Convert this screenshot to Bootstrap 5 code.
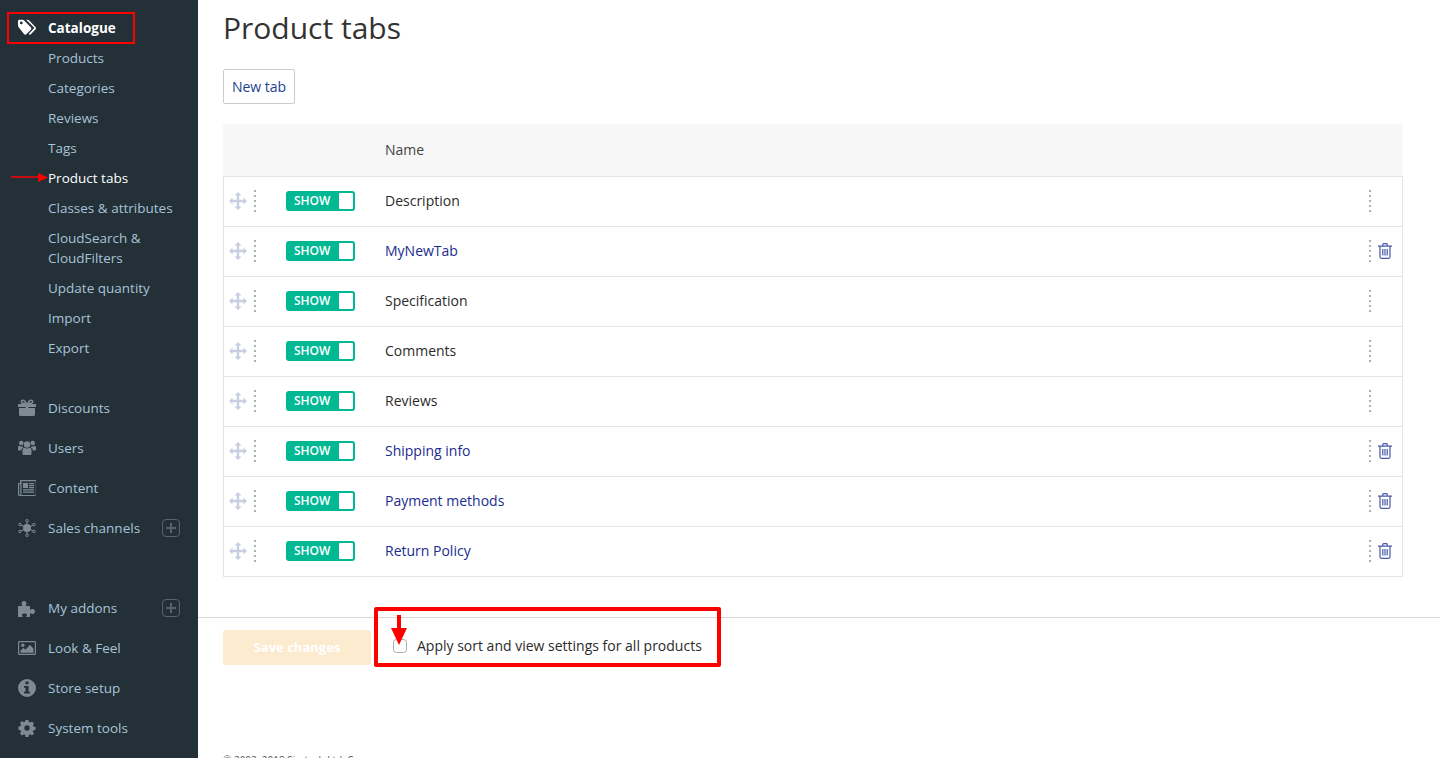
<!DOCTYPE html>
<html lang="en">
<head>
  <meta charset="UTF-8" />
  <title>Product tabs</title>
  <link href="https://cdn.jsdelivr.net/npm/bootstrap@5.3.0/dist/css/bootstrap.min.css" rel="stylesheet"/>
  <style>
    html, body { height: 100%; overflow: hidden; }
    body {
      font-family: "Open Sans", "Liberation Sans", sans-serif;
      font-size: 14px;
      color: #2b2b2b;
      background: #fff;
      position: relative;
    }
    .page-wrap { height: 758px; overflow: hidden; }

    /* sidebar */
    .side-bar { width: 198px; flex: none; background: #233038; padding-top: 13px; font-size: 13.5px; }
    .side-item {
      height: 30px;
      display: flex;
      align-items: center;
      padding-left: 48px;
      color: #a9c3d6;
      text-decoration: none;
      position: relative;
    }
    .side-item.is-head { color: #fff; font-weight: 700; }
    .side-item.is-on { color: #fff; }
    .side-main { height: 40px; }
    .side-cont { height: 20px; margin-top: -5px; margin-bottom: 5px; }
    .side-gap { height: 25px; }
    .side-gap2 { height: 40px; }
    .side-icon { position: absolute; left: 18px; top: 50%; transform: translateY(-50%); width: 18px; height: 18px; fill: #7d8a92; }
    .is-head .side-icon { fill: #fff; }
    .side-plus {
      position: absolute; left: 162px; top: 50%; transform: translateY(-50%);
      width: 18px; height: 18px;
      border: 1px solid #56636b; border-radius: 4px;
    }
    .side-plus::before, .side-plus::after { content: ""; position: absolute; background: #56636b; }
    .side-plus::before { left: 3px; right: 3px; top: 7px; height: 2px; }
    .side-plus::after { top: 3px; bottom: 3px; left: 7px; width: 2px; }

    /* main */
    .main-area { padding: 8px 37px 0 25px; height: 617px; }
    .page-title { font-size: 30px; font-weight: 400; line-height: 40px; margin: 0 0 21px; color: #333; }
    .btn-newtab {
      font-size: 14px; color: #1d3f8f; border: 1px solid #ccc; background: #fff;
      height: 35px; width: 72px; padding: 0; border-radius: 2px; display: block; margin-bottom: 20px;
    }
    .tabs-head { height: 53px; background: #f7f7f7; border-bottom: 1px solid #e5e5e5; display: flex; align-items: center; padding: 0 0 2px 162px; color: #444; }
    .tabs-list { border: 1px solid #e5e5e5; border-top: 0; }
    .tabs-row { height: 50px; display: flex; align-items: center; border-bottom: 1px solid #e5e5e5; padding-bottom: 2px; }
    .tabs-row:last-child { height: 49px; border-bottom: 0; padding-bottom: 2px; }
    .move-icon { width: 18px; height: 18px; margin-left: 5px; margin-right: 7px; fill: #c9cfe0; flex: none; }
    .dots-col { width: 2px; height: 22px; flex: none; background-image: linear-gradient(#a9b2bb 2px, transparent 2px); background-size: 2px 5px; }
    .toggle-show {
      width: 69px; height: 20px; margin-left: 30px; margin-right: 30px; flex: none;
      background: #00b894; border-radius: 3px; color: #fff; font-size: 12px; font-weight: 600;
      display: flex; align-items: center; padding-left: 8px; position: relative;
    }
    .toggle-show::after { content: ""; position: absolute; right: 2px; top: 2px; width: 14px; height: 16px; background: #fff; border-radius: 1px; }
    .tab-name { flex: 1; }
    .tab-link { color: #1a2c8f; text-decoration: none; }
    .row-end { width: 33px; flex: none; display: flex; align-items: center; }
    .trash-icon { width: 14px; height: 16px; margin-left: 7px; flex: none; }

    /* bottom */
    .bottom-bar { border-top: 1px solid #d6d6d6; padding: 12px 0 0 25px; display: flex; align-items: flex-start; }
    .btn-save {
      width: 148px; height: 35px; background: #fdebd0; color: #fff; border: 0; border-radius: 3px;
      font-weight: 700; font-size: 13px; padding: 0;
    }
    .apply-check { margin: 5px 0 0 22px; display: flex; align-items: center; gap: 10px; color: #2b2b2b; }
    .apply-check input { width: 14px; height: 14px; margin: 0; border-color: #aaa; border-radius: 3px; }
    .foot-copy { position: absolute; left: 223px; top: 753px; font-size: 10px; color: #555; }

    /* red annotations on top of the shot */
    .note-box { position: absolute; border: 3px solid #f00; pointer-events: none; }
    .note-a { left: 7px; top: 12px; width: 128px; height: 32px; border-width: 2px; }
    .note-b { left: 374px; top: 607px; width: 347px; height: 60px; border-width: 4px; border-radius: 2px; }
    .note-svg { position: absolute; pointer-events: none; }
    .note-left { left: 10px; top: 170px; }
    .note-down { left: 390px; top: 614px; }
  </style>
</head>
<body>
  <div class="page-wrap d-flex">
    <!-- Sidebar -->
    <nav class="side-bar">
      <a class="side-item is-head" href="#">
        <svg class="side-icon" viewBox="0 0 18 18"><path fill-rule="evenodd" d="M0 4.500V2.400C0 1.500.7.800 1.600.800h2.800c.7 0 1.300.3 1.700.7l6.700 6.800c.7.700.7 1.700 0 2.400l-4.300 4.400c-.7.700-1.800.700-2.500 0L.7 8.200C.2 7.700 0 7 0 6.200zM3.300 5.300a1.400 1.400 0 1 0 0-2.800 1.400 1.400 0 0 0 0 2.800z"/><path d="M8.200.8h1.300c.7 0 1.300.3 1.700.7l6.200 6.400c.8.800.8 1.800 0 2.600l-4.600 4.700c-.5.500-1.400.5-1.800.1l-.4-.4 5.200-5.300c.4-.4.4-.9 0-1.300z"/></svg>
        Catalogue
      </a>
      <a class="side-item" href="#">Products</a>
      <a class="side-item" href="#">Categories</a>
      <a class="side-item" href="#">Reviews</a>
      <a class="side-item" href="#">Tags</a>
      <a class="side-item is-on" href="#">Product tabs</a>
      <a class="side-item" href="#">Classes &amp; attributes</a>
      <a class="side-item" href="#">CloudSearch &amp;</a>
      <a class="side-item side-cont" href="#">CloudFilters</a>
      <a class="side-item" href="#">Update quantity</a>
      <a class="side-item" href="#">Import</a>
      <a class="side-item" href="#">Export</a>
      <div class="side-gap"></div>
      <a class="side-item side-main" href="#">
        <svg class="side-icon" viewBox="0 0 18 18"><path d="M1 9h6.500v8H2.500C1.700 17 1 16.300 1 15.500zM10.500 9H17v6.500c0 .8-.7 1.500-1.500 1.500h-5zM0 5h7.500v3H0zM10.500 5H18v3h-7.500zM7.500 5h3v12h-3z" /><path d="M5 .5c1.700 0 3 1.500 4 4 1-2.500 2.300-4 4-4 1.500 0 2.500 1 2.500 2.200S14.500 5 13 5H5C3.500 5 2.500 3.900 2.500 2.700S3.500.5 5 .5zm0 1.500c-.6 0-1 .3-1 .8s.5.8 1 .8h2.200C6.500 2.800 5.800 2 5 2zm8 0c-.8 0-1.500.8-2.200 1.600H13c.5 0 1-.3 1-.8s-.4-.8-1-.8z"/></svg>
        Discounts
      </a>
      <a class="side-item side-main" href="#">
        <svg class="side-icon" viewBox="0 0 18 18"><circle cx="9" cy="5.500" r="3.200"/><circle cx="3.300" cy="4" r="2.300"/><circle cx="14.700" cy="4" r="2.300"/><path d="M4.500 11c0-1.500 1-2.300 2-2.300.7.500 1.500.8 2.500.8s1.800-.3 2.500-.8c1 0 2 .8 2 2.300v3.500c0 1-.7 1.500-1.500 1.500H6c-.8 0-1.500-.5-1.500-1.500z"/><path d="M0 8.500C0 7.300.8 6.800 1.500 6.800c.5.400 1.100.6 1.800.6.500 0 .8-.1 1.200-.2.200.6.600 1 1 1.400C4 9 3.300 10 3.200 11.500H1c-.6 0-1-.4-1-1zM18 8.500c0-1.200-.8-1.700-1.500-1.700-.5.400-1.100.6-1.800.6-.5 0-.8-.1-1.200-.2-.2.6-.6 1-1 1.400 1.500.400 2.200 1.400 2.300 2.900H17c.6 0 1-.4 1-1z"/></svg>
        Users
      </a>
      <a class="side-item side-main" href="#">
        <svg class="side-icon" viewBox="0 0 18 18"><path fill-rule="evenodd" d="M3 1h14.500c.3 0 .5.200.5.500v14c0 .8-.7 1.500-1.500 1.500h-15C.7 17 0 16.300 0 15.500V4h2V1.500C2 1.200 2.700 1 3 1zm.5 1.300V15c0 .4-.2.800-.5 1h13.800c.5 0 .9-.4.900-.8V2.300zM1.200 5v10.500c0 .4.200.6.500.6s.6-.2.6-.6V5z"/><path d="M5 4h5v5H5zM11 4h5v1.200h-5zM11 6h5v1.200h-5zM11 8h5v1.200h-5zM5 10.300h11v1.200H5zM5 12.600h11v1.200H5z"/></svg>
        Content
      </a>
      <a class="side-item side-main" href="#">
        <svg class="side-icon" viewBox="0 0 18 18"><circle cx="9" cy="9" r="4"/><g fill="none" stroke="#7d8a92" stroke-width="1"><circle cx="9" cy="1.800" r="1.300"/><circle cx="9" cy="16.200" r="1.300"/><circle cx="2" cy="5.500" r="1.300"/><circle cx="16" cy="5.500" r="1.300"/><circle cx="2" cy="12.500" r="1.300"/><circle cx="16" cy="12.500" r="1.300"/><path d="M9 3v3M9 12v3M3 6l3 1.500M15 6l-3 1.500M3 12l3-1.500M15 12l-3-1.500"/></g></svg>
        Sales channels
        <span class="side-plus"></span>
      </a>
      <div class="side-gap2"></div>
      <a class="side-item side-main" href="#">
        <svg class="side-icon" viewBox="0 0 18 18"><path d="M0 7h4c.3 0 .4-.2.3-.5-.3-.6-.8-1-.8-2C3.500 3 4.700 2 6 2s2.500 1 2.500 2.500c0 1-.5 1.400-.8 2-.1.300 0 .5.300.5h4v3.500c0 .3.200.4.500.3.600-.3 1-.8 2-.8 1.500 0 2.500 1.200 2.500 2.500S16 15 14.500 15c-1 0-1.400-.5-2-.8-.3-.1-.5 0-.5.300V18H8.500c-.3 0-.4-.2-.3-.5.3-.5.8-.9.800-1.500 0-1-1-1.500-2.500-1.500S4 15 4 16c0 .6.500 1 .8 1.500.1.300 0 .5-.3.500H0z"/></svg>
        My addons
        <span class="side-plus"></span>
      </a>
      <a class="side-item side-main" href="#">
        <svg class="side-icon" viewBox="0 0 18 18"><path fill-rule="evenodd" d="M0 3.500C0 2.700.7 2 1.500 2h15c.8 0 1.500.7 1.500 1.500v11c0 .8-.7 1.500-1.500 1.500h-15C.7 16 0 15.300 0 14.500zm1.500-.3c-.2 0-.3.100-.3.300v11c0 .2.100.3.300.3h15c.2 0 .3-.1.300-.3v-11c0-.2-.1-.3-.3-.3z"/><circle cx="4.800" cy="6.200" r="1.700"/><path d="M2.500 13.800v-2l3-3 2 2 4.500-5 3.500 4v4z"/></svg>
        Look &amp; Feel
      </a>
      <a class="side-item side-main" href="#">
        <svg class="side-icon" viewBox="0 0 18 18"><path fill-rule="evenodd" d="M9 0a9 9 0 1 1 0 18A9 9 0 0 1 9 0zM7.500 2.500v2.700h3V2.500zM6 7v1.800h1.500v4H6v1.800h6v-1.800h-1.500V7z"/></svg>
        Store setup
      </a>
      <a class="side-item side-main" href="#">
        <svg class="side-icon" viewBox="0 0 18 18"><path fill-rule="evenodd" d="M7.400 0h3.200l.5 2.400 1.400.6 2-1.300 2.300 2.300-1.300 2 .6 1.400 2.400.5v3.200l-2.400.5-.6 1.400 1.300 2-2.300 2.300-2-1.300-1.400.6-.5 2.400H7.400l-.5-2.400-1.400-.6-2 1.300-2.300-2.300 1.300-2-.6-1.400-2.400-.5V7.400l2.400-.5.6-1.400-1.300-2 2.300-2.300 2 1.300 1.400-.6zM9 6a3 3 0 1 0 0 6 3 3 0 0 0 0-6z" transform="translate(.9 .9) scale(.9)"/></svg>
        System tools
      </a>
    </nav>

    <!-- Main -->
    <div class="flex-grow-1">
      <div class="main-area">
        <h1 class="page-title">Product tabs</h1>
        <button class="btn-newtab" type="button">New tab</button>
        <div class="tabs-head">Name</div>
        <div class="tabs-list" id="tabRows"></div>
      </div>
      <div class="bottom-bar">
        <button class="btn-save" type="button">Save changes</button>
        <label class="apply-check"><input class="form-check-input" type="checkbox"/> Apply sort and view settings for all products</label>
      </div>
    </div>
  </div>

  <div class="foot-copy">© 2002–2018 Simtech Ltd. Co</div>

  <!-- Annotations -->
  <div class="note-box note-a"></div>
  <div class="note-box note-b"></div>
  <svg class="note-svg note-left" width="40" height="16" viewBox="0 0 40 16"><path d="M1 7h28" stroke="#f00" stroke-width="1.500"/><path d="M28 3l10 4.500-10 4.500z" fill="#f00"/></svg>
  <svg class="note-svg note-down" width="18" height="32" viewBox="0 0 18 32"><path d="M9 1v16" stroke="#f00" stroke-width="4"/><path d="M1 14h16l-8 17z" fill="#f00"/></svg>

  <script src="https://cdn.jsdelivr.net/npm/bootstrap@5.3.0/dist/js/bootstrap.bundle.min.js"></script>
  <script>
    const tabs = [
      ['Description', false], ['MyNewTab', true], ['Specification', false], ['Comments', false],
      ['Reviews', false], ['Shipping info', true], ['Payment methods', true], ['Return Policy', true]
    ];
    const moveSvg = '<svg class="move-icon" viewBox="0 0 18 18"><path d="M9 0l3.500 3.500h-2.300v4.300h4.300V5.500L18 9l-3.500 3.500v-2.300h-4.300v4.300h2.300L9 18l-3.500-3.500h2.300v-4.300H3.500v2.300L0 9l3.500-3.500v2.300h4.300V3.500H5.500z"/></svg>';
    const trashSvg = '<svg class="trash-icon" viewBox="0 0 14 16" fill="none" stroke="#4a5aa8" stroke-width="1.200"><path d="M0 3.200h14M2 3.200v10.600c0 .9.600 1.500 1.400 1.500h7.200c.8 0 1.400-.6 1.400-1.500V3.200M4.800 3V1.400c0-.4.300-.7.700-.7h3c.4 0 .7.300.7.700V3M4.800 6v6.500M7 6v6.500M9.200 6v6.500"/></svg>';
    document.getElementById('tabRows').innerHTML = tabs.map(([name, custom]) => `
      <div class="tabs-row">
        ${moveSvg}
        <span class="dots-col"></span>
        <span class="toggle-show">SHOW</span>
        <span class="tab-name">${custom ? `<a class="tab-link" href="#">${name}</a>` : name}</span>
        <span class="row-end"><span class="dots-col"></span>${custom ? trashSvg : ''}</span>
      </div>`).join('');
  </script>
</body>
</html>
